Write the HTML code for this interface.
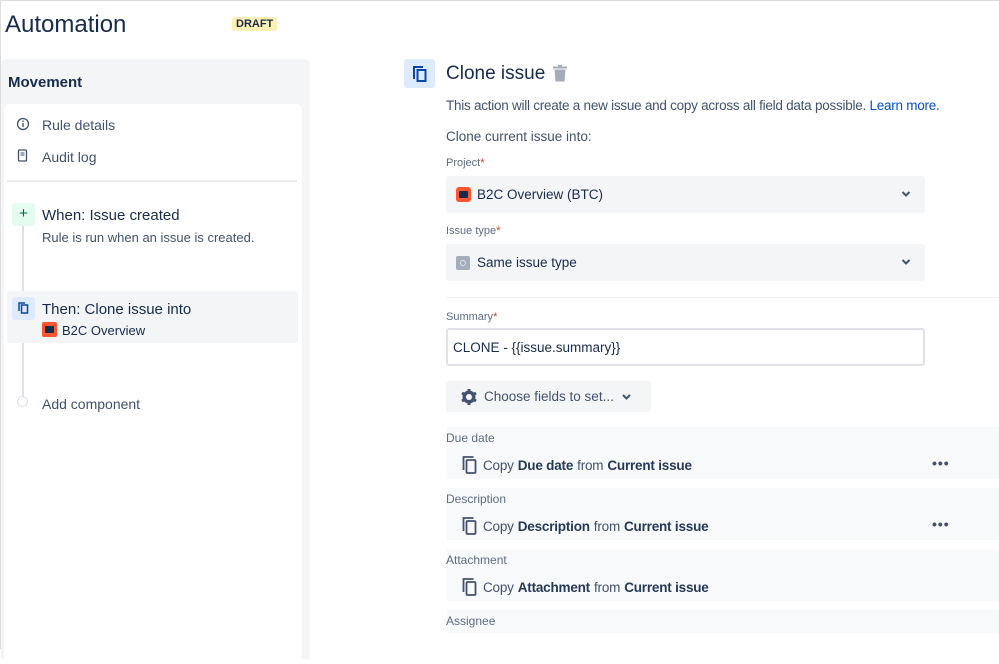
<!DOCTYPE html>
<html><head><style>
*{margin:0;padding:0;box-sizing:border-box}
body{width:999px;height:649px;overflow:hidden;background:#fff;font-family:"Liberation Sans",sans-serif;color:#172b4d;position:relative;border-top:1px solid #ddd;border-left:1px solid #ddd}
.a{position:absolute;white-space:nowrap}
.lbl{font-size:11px;color:#5e6c84}
.req{color:#de350b}
.sel{background:#f4f5f7;border-radius:3px;font-size:13.5px;display:flex;align-items:center;padding-left:10px}
.row{background:#f8f9fa;left:446px;width:553px}
.copy{font-size:13.5px;color:#42526e;display:flex;align-items:center;gap:4px;letter-spacing:-0.2px}
.copy b{color:#253858}
.dots{font-size:14px;letter-spacing:1px;color:#42526e;font-weight:bold}
</style></head><body>
<div class="a" style="left:4px;top:10px;font-size:24px;color:#172b4d">Automation</div>
<div class="a" style="left:231px;top:16px;background:#fff0b3;color:#172b4d;font-size:11px;font-weight:bold;padding:1px 4px;border-radius:3px">DRAFT</div>

<div class="a" style="left:0;top:58px;width:309px;height:600px;background:#f4f5f7;border-radius:6px 6px 0 0"></div>
<div class="a" style="left:7px;top:73px;font-size:15px;font-weight:bold">Movement</div>
<div class="a" style="left:3px;top:103px;width:298px;height:560px;background:#fff;border-radius:6px"></div>
<svg class="a" style="left:15px;top:116px" width="14" height="14" viewBox="0 0 14 14"><circle cx="7" cy="7" r="5.5" fill="none" stroke="#42526e" stroke-width="1.3"/><rect x="6.3" y="6" width="1.4" height="4" fill="#42526e"/><circle cx="7" cy="4.2" r=".8" fill="#42526e"/></svg>
<div class="a" style="left:41px;top:116px;font-size:14px;color:#42526e">Rule details</div>
<svg class="a" style="left:16px;top:148px" width="12" height="14" viewBox="0 0 12 14"><rect x="1.5" y="1" width="8" height="11" rx="1" fill="none" stroke="#42526e" stroke-width="1.3"/><line x1="3.5" y1="4" x2="7.5" y2="4" stroke="#42526e"/><line x1="3.5" y1="6" x2="7.5" y2="6" stroke="#42526e"/></svg>
<div class="a" style="left:41px;top:148px;font-size:14px;color:#42526e">Audit log</div>
<div class="a" style="left:6px;top:179px;width:290px;height:2px;background:#ebecf0"></div>
<div class="a" style="left:21px;top:210px;width:2px;height:190px;background:#dfe1e6"></div>
<div class="a" style="left:6px;top:290px;width:291px;height:52px;background:#f4f5f7;border-radius:3px"></div>
<div class="a" style="left:11px;top:202px;width:23px;height:23px;background:#e3fcef;color:#006644;font-size:15px;text-align:center;line-height:22px;border-radius:3px">+</div>
<div class="a" style="left:41px;top:206px;font-size:15px;color:#172b4d">When: Issue created</div>
<div class="a" style="left:41px;top:229px;font-size:13px;color:#42526e">Rule is run when an issue is created.</div>
<div class="a" style="left:11px;top:296px;width:23px;height:23px;background:#deebff;border-radius:3px"></div>
<svg class="a" style="left:16px;top:300px" width="13" height="14" viewBox="0 0 13 14"><path d="M2 10V2h6" fill="none" stroke="#0747a6" stroke-width="1.5"/><rect x="4.5" y="4" width="6" height="8" fill="none" stroke="#0747a6" stroke-width="1.5"/></svg>
<div class="a" style="left:41px;top:300px;font-size:15px">Then: Clone issue into</div>
<div class="a" style="left:41px;top:321px;width:15px;height:15px;background:#ff5630;border-radius:2px"><div style="margin:4px 3px;height:7px;background:#172b4d;border-radius:1px"></div></div>
<div class="a" style="left:61px;top:322px;font-size:13px;color:#172b4d">B2C Overview</div>
<div class="a" style="left:16px;top:395px;width:11px;height:11px;border:1.5px solid #dfe1e6;border-radius:50%;background:#fff"></div>
<div class="a" style="left:41px;top:395px;font-size:14px;color:#42526e">Add component</div>

<div class="a" style="left:403px;top:58px;width:31px;height:29px;background:#deebff;border-radius:3px"></div>
<svg class="a" style="left:410px;top:63px" width="18" height="20" viewBox="0 0 18 20"><path d="M3 15V3h9" fill="none" stroke="#0747a6" stroke-width="2"/><rect x="6.5" y="6" width="8" height="11" fill="none" stroke="#0747a6" stroke-width="2"/></svg>
<div class="a" style="left:445px;top:62px;font-size:19px;color:#172b4d">Clone issue</div>
<svg class="a" style="left:551px;top:64px" width="16" height="17" viewBox="0 0 16 17"><rect x="1" y="1.5" width="14" height="2" fill="#a5adba"/><rect x="6" y="0" width="4" height="2" fill="#a5adba"/><path d="M2.5 4.5h11l-1 12h-9z" fill="#a5adba"/></svg>
<div class="a" style="left:445px;top:97px;font-size:13.5px;color:#42526e;letter-spacing:-0.25px">This action will create a new issue and copy across all field data possible. <span style="color:#0052cc">Learn more.</span></div>
<div class="a" style="left:445px;top:128px;font-size:13.5px;color:#42526e">Clone current issue into:</div>
<div class="a lbl" style="left:445px;top:156px">Project<span class="req">*</span></div>
<div class="a sel" style="left:445px;top:175px;width:479px;height:37px"><span style="width:15px;height:15px;background:#ff5630;border-radius:3px;display:inline-block;margin-right:6px;position:relative"><span style="position:absolute;left:3px;top:4px;width:9px;height:7px;background:#172b4d;border-radius:1px"></span></span>B2C Overview (BTC)</div>
<div class="a lbl" style="left:445px;top:224px">Issue type<span class="req">*</span></div>
<div class="a sel" style="left:445px;top:243px;width:479px;height:37px"><span style="width:14px;height:14px;background:#a5adba;border-radius:2px;display:inline-block;margin-right:7px;position:relative"><span style="position:absolute;left:4px;top:4px;width:6px;height:6px;border:1px solid #dfe1e6;border-radius:50%"></span></span>Same issue type</div>
<svg class="a" style="left:900px;top:189px" width="10" height="8"><path d="M1.5 2l3.5 3.5L8.5 2" fill="none" stroke="#42526e" stroke-width="2"/></svg>
<svg class="a" style="left:900px;top:257px" width="10" height="8"><path d="M1.5 2l3.5 3.5L8.5 2" fill="none" stroke="#42526e" stroke-width="2"/></svg>
<div class="a" style="left:445px;top:296px;width:554px;height:1px;background:#f0f1f3"></div>
<div class="a lbl" style="left:445px;top:310px">Summary<span class="req">*</span></div>
<div class="a" style="left:445px;top:327px;width:479px;height:38px;border:2px solid #dfe1e6;border-radius:3px;font-size:13.5px;padding:10px 5px;color:#172b4d">CLONE - {{issue.summary}}</div>
<div class="a" style="left:445px;top:380px;width:205px;height:31px;background:#f4f5f7;border-radius:3px;font-size:13.5px;color:#42526e;display:flex;align-items:center;padding-left:14px;gap:6px">
<svg width="18" height="18" viewBox="0 0 18 18"><circle cx="9" cy="9" r="5" fill="none" stroke="#42526e" stroke-width="3"/><g stroke="#42526e" stroke-width="3"><line x1="9" y1="1" x2="9" y2="17"/><line x1="2" y1="5" x2="16" y2="13"/><line x1="2" y1="13" x2="16" y2="5"/></g><circle cx="9" cy="9" r="3" fill="#f4f5f7"/></svg>Choose fields to set... <svg width="14" height="10"><path d="M3 3l3.5 3.5L10 3" fill="none" stroke="#42526e" stroke-width="2"/></svg></div>

<div class="a row" style="top:426px;height:52px"></div>
<div class="a row" style="top:487px;height:52px"></div>
<div class="a row" style="top:548px;height:52px"></div>
<div class="a row" style="top:609px;height:23px"></div>
<div class="a" style="left:445px;top:430px;font-size:12px;color:#5e6c84">Due date</div>
<div class="a" style="left:445px;top:491px;font-size:12px;color:#5e6c84">Description</div>
<div class="a" style="left:445px;top:552px;font-size:12px;color:#5e6c84">Attachment</div>
<div class="a" style="left:445px;top:613px;font-size:12px;color:#5e6c84">Assignee</div>
<div class="a copy" style="left:460px;top:454px"><svg width="18" height="20" viewBox="0 0 18 20"><path d="M2.5 15V2h10" fill="none" stroke="#42526e" stroke-width="1.8"/><rect x="5.5" y="5" width="9" height="13" rx="1" fill="none" stroke="#42526e" stroke-width="1.8"/></svg>Copy <b>Due date</b> from <b>Current issue</b></div>
<div class="a copy" style="left:460px;top:515px"><svg width="18" height="20" viewBox="0 0 18 20"><path d="M2.5 15V2h10" fill="none" stroke="#42526e" stroke-width="1.8"/><rect x="5.5" y="5" width="9" height="13" rx="1" fill="none" stroke="#42526e" stroke-width="1.8"/></svg>Copy <b>Description</b> from <b>Current issue</b></div>
<div class="a copy" style="left:460px;top:576px"><svg width="18" height="20" viewBox="0 0 18 20"><path d="M2.5 15V2h10" fill="none" stroke="#42526e" stroke-width="1.8"/><rect x="5.5" y="5" width="9" height="13" rx="1" fill="none" stroke="#42526e" stroke-width="1.8"/></svg>Copy <b>Attachment</b> from <b>Current issue</b></div>
<div class="a dots" style="left:931px;top:454px">•••</div>
<div class="a dots" style="left:931px;top:515px">•••</div>
</body></html>
